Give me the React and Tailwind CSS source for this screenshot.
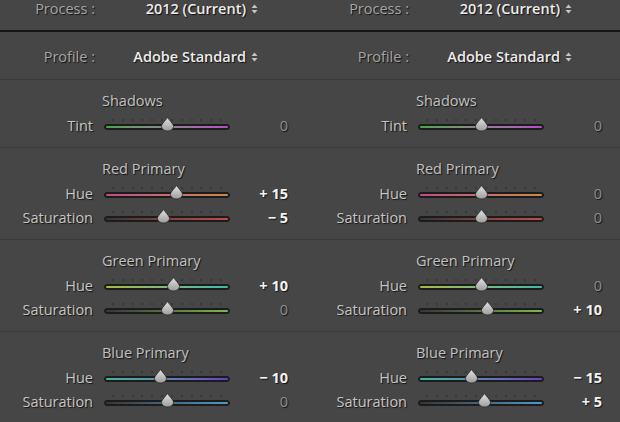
import React from 'react';

const shadowText = '[text-shadow:1px_1px_1px_rgba(0,0,0,0.75)]';

const tracks = {
  tint: 'from-[#46a646] to-[#b64ac6]',
  redHue: 'from-[#c24a86] to-[#c88a44]',
  redSat: 'from-[#363636] to-[#c84848]',
  greenHue: 'from-[#a8b83c] to-[#3cb8a8]',
  greenSat: 'from-[#363636] to-[#7cb84a]',
  blueHue: 'from-[#3cb89a] to-[#6a3cc8]',
  blueSat: 'from-[#363636] to-[#4a9ac8]',
};

const columns = [
  {
    sections: [
      { title: 'Shadows', rows: [{ label: 'Tint', track: 'tint', value: 0 }] },
      {
        title: 'Red Primary',
        rows: [
          { label: 'Hue', track: 'redHue', value: 15 },
          { label: 'Saturation', track: 'redSat', value: -5 },
        ],
      },
      {
        title: 'Green Primary',
        rows: [
          { label: 'Hue', track: 'greenHue', value: 10 },
          { label: 'Saturation', track: 'greenSat', value: 0 },
        ],
      },
      {
        title: 'Blue Primary',
        rows: [
          { label: 'Hue', track: 'blueHue', value: -10 },
          { label: 'Saturation', track: 'blueSat', value: 0 },
        ],
      },
    ],
  },
  {
    sections: [
      { title: 'Shadows', rows: [{ label: 'Tint', track: 'tint', value: 0 }] },
      {
        title: 'Red Primary',
        rows: [
          { label: 'Hue', track: 'redHue', value: 0 },
          { label: 'Saturation', track: 'redSat', value: 0 },
        ],
      },
      {
        title: 'Green Primary',
        rows: [
          { label: 'Hue', track: 'greenHue', value: 0 },
          { label: 'Saturation', track: 'greenSat', value: 10 },
        ],
      },
      {
        title: 'Blue Primary',
        rows: [
          { label: 'Hue', track: 'blueHue', value: -15 },
          { label: 'Saturation', track: 'blueSat', value: 5 },
        ],
      },
    ],
  },
];

function UpDown() {
  return (
    <svg width="7" height="10" viewBox="0 0 7 10" className="ml-[5px] inline-block">
      <path d="M0.5 4 L3.5 0.5 L6.5 4 Z" fill="#c4c4c4" />
      <path d="M0.5 6 L3.5 9.5 L6.5 6 Z" fill="#c4c4c4" />
    </svg>
  );
}

function Thumb() {
  return (
    <svg width="15" height="16" viewBox="0 0 15 16">
      <defs>
        <linearGradient id="thumbFill" x1="0" y1="0" x2="0" y2="1">
          <stop offset="0" stopColor="#e6e6e6" />
          <stop offset="1" stopColor="#9c9c9c" />
        </linearGradient>
      </defs>
      <path
        d="M7.5 1 C8.5 4 13.5 7.5 13.5 10.5 A6 4.5 0 0 1 1.5 10.5 C1.5 7.5 6.5 4 7.5 1 Z"
        fill="url(#thumbFill)"
        stroke="#2a2a2a"
        strokeWidth="0.8"
      />
    </svg>
  );
}

function Slider({ track, value }) {
  const left = 63 + (value / 100) * 63;
  return (
    <div className="relative w-[126px] h-6">
      {/* tick marks */}
      <div className="absolute left-[8px] right-[8px] top-[5px] flex justify-between">
        {Array.from({ length: 12 }).map((_, i) => (
          <div key={i} className="w-[2px] h-[2px] rounded-full bg-[#343434]" />
        ))}
      </div>
      <div className="absolute left-0 right-0 top-[10px] h-[6px] rounded-full border border-[#1c1c1c] bg-[#1c1c1c] p-[1px]">
        <div className={`h-full w-full rounded-full bg-linear-to-r ${tracks[track]}`} />
      </div>
      <div className="absolute top-[2px]" style={{ left: `${left - 7.5}px` }}>
        <Thumb />
      </div>
    </div>
  );
}

function formatValue(v) {
  if (v === 0) return '0';
  return v > 0 ? `+ ${v}` : `\u2212 ${Math.abs(v)}`;
}

function Row({ label, track, value }) {
  return (
    <div className="flex items-center h-6">
      <div className={`w-[93px] text-right text-[#c6c6c6] ${shadowText}`}>{label}</div>
      <div className="ml-[11px]">
        <Slider track={track} value={value} />
      </div>
      <div
        className={`w-[58px] text-right ${shadowText} ${
          value === 0 ? 'text-[#8e8e8e]' : 'text-[#f2f2f2] font-bold'
        }`}
      >
        {formatValue(value)}
      </div>
    </div>
  );
}

function Column({ sections }) {
  return (
    <div className="w-[314px] shrink-0">
      {/* Process */}
      <div className="h-[32px] flex items-start border-b-2 border-[#151515]">
        <div className={`w-[95px] text-right leading-[18px] text-[#a6a6a6] ${shadowText}`}>Process :</div>
        <div className={`w-[163px] flex items-center justify-end leading-[18px] font-semibold text-[#ececec] ${shadowText}`}>
          2012 (Current)
          <UpDown />
        </div>
      </div>
      {/* Profile */}
      <div className="h-[48px] pt-[3px] flex items-center border-b border-[#3a3a3a]">
        <div className={`w-[95px] text-right text-[#a6a6a6] ${shadowText}`}>Profile :</div>
        <div className={`w-[163px] flex items-center justify-end font-semibold text-[#ececec] ${shadowText}`}>
          Adobe Standard
          <UpDown />
        </div>
      </div>
      {sections.map((s) => (
        <div key={s.title} className="pt-[11px] pb-[9px] border-b border-[#3a3a3a]">
          <div className={`h-5 leading-5 pl-[102px] text-[#c2c2c2] ${shadowText}`}>{s.title}</div>
          <div className="mt-[3px]">
            {s.rows.map((r) => (
              <Row key={r.label} {...r} />
            ))}
          </div>
        </div>
      ))}
    </div>
  );
}

export default function App() {
  return (
    <div
      className="w-[620px] h-[422px] overflow-hidden bg-[#464646] flex text-[14.5px]"
      style={{ fontFamily: '"Open Sans", "Noto Sans", sans-serif' }}
    >
      {columns.map((c, i) => (
        <Column key={i} sections={c.sections} />
      ))}
    </div>
  );
}
